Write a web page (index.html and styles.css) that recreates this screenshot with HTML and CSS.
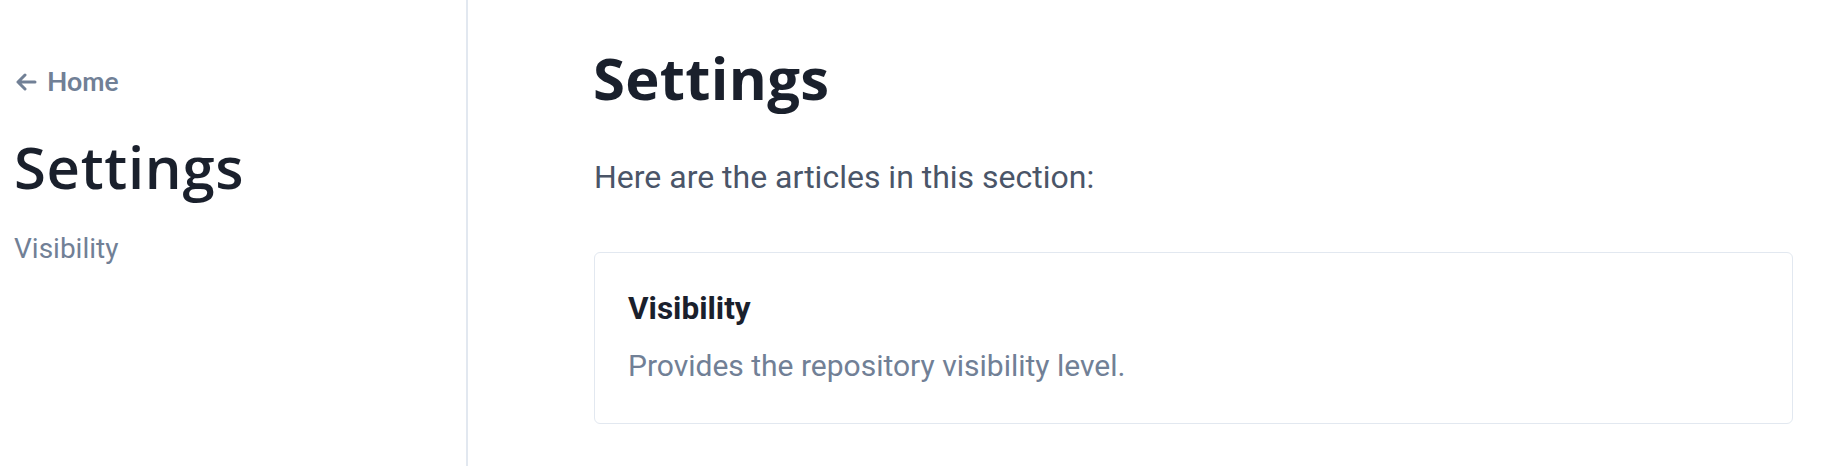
FILE: index.html
```html
<!DOCTYPE html>
<html lang="en">
<head>
<meta charset="utf-8">
<title>Settings</title>
<link rel="stylesheet" href="styles.css">
</head>
<body>
<div class="layout">
  <aside class="sidebar">
    <a class="back-link" href="#">
      <svg class="back-icon" width="22" height="18" viewBox="0 0 22 18" aria-hidden="true">
        <path d="M20 9H3M10 2L3 9l7 7" fill="none" stroke="currentColor" stroke-width="3" stroke-linecap="round" stroke-linejoin="round"/>
      </svg>
      <span>Home</span>
    </a>
    <h2 class="sidebar-title">Settings</h2>
    <nav class="sidebar-nav">
      <a class="sidebar-link" href="#">Visibility</a>
    </nav>
  </aside>
  <main class="content">
    <h1 class="page-title">Settings</h1>
    <p class="intro">Here are the articles in this section:</p>
    <a class="card" href="#">
      <div class="card-title">Visibility</div>
      <div class="card-desc">Provides the repository visibility level.</div>
    </a>
  </main>
</div>
</body>
</html>
```

FILE: styles.css
```css
* {
  box-sizing: border-box;
}

html, body {
  margin: 0;
  padding: 0;
  background: #ffffff;
  height: 100%;
}

body {
  font-family: Roboto, "Liberation Sans", sans-serif;
  color: #1a202c;
}

a {
  text-decoration: none;
  color: inherit;
}

.layout {
  display: flex;
  min-height: 100vh;
}

.sidebar {
  width: 468px;
  flex-shrink: 0;
  border-right: 2px solid #e2e8f0;
  padding: 62px 0 0 15px;
  display: flex;
  flex-direction: column;
  align-items: flex-start;
}

.back-link {
  display: flex;
  align-items: center;
  gap: 10px;
  font-family: Lato, "Open Sans", sans-serif;
  font-weight: 700;
  font-size: 26.5px;
  line-height: 39px;
  color: #718096;
}

.back-icon {
  display: block;
  margin-top: 1px;
}

.sidebar-title {
  margin: 31px 0 0 -1px;
  font-family: "Open Sans", sans-serif;
  font-weight: 600;
  font-size: 58px;
  line-height: 1.2;
  letter-spacing: 0.7px;
  color: #1a202c;
}

.sidebar-nav {
  margin-top: 26px;
  display: flex;
  flex-direction: column;
}

.sidebar-link {
  font-family: Roboto, sans-serif;
  font-size: 28px;
  line-height: 42px;
  color: #718096;
  margin-left: -1px;
}

.content {
  flex: 1;
  padding: 43px 31px 0 126px;
  display: flex;
  flex-direction: column;
}

.page-title {
  margin: 0 0 0 -1px;
  font-family: "Open Sans", sans-serif;
  font-weight: 700;
  font-size: 58px;
  line-height: 1.2;
  letter-spacing: 0.3px;
  color: #1a202c;
}

.intro {
  margin: 40px 0 0 0;
  font-size: 32px;
  line-height: 48px;
  color: #4a5568;
}

.card {
  display: flex;
  flex-direction: column;
  margin-top: 51px;
  border: 1px solid #e2e8f0;
  border-radius: 6px;
  padding: 33px 33px 35px 33px;
}

.card-title {
  font-size: 31.5px;
  font-weight: 700;
  line-height: 45px;
  color: #1a202c;
}

.card-desc {
  margin-top: 12px;
  font-size: 30px;
  line-height: 45px;
  color: #718096;
}
```
